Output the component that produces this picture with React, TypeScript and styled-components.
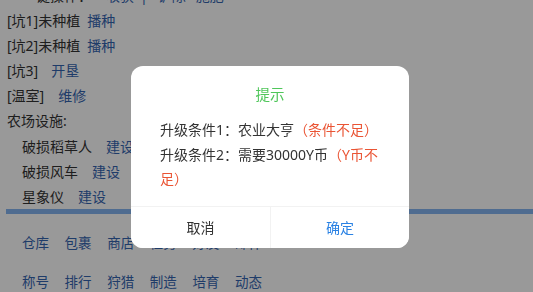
import styled, { createGlobalStyle } from "styled-components";

const GlobalStyle = createGlobalStyle`
  html, body {
    margin: 0;
    padding: 0;
    background: #ffffff;
    font-family: "Noto Sans", "Noto Sans CJK SC", sans-serif;
    overflow: hidden;
  }
`;

// page under the dialog
const Page = styled.div`
  margin-top: -17px;
  color: #333333;
  font-size: 14px;
`;

const Lines = styled.div`
  padding-left: 7px;
`;

const Line = styled.div<{ $indent?: boolean }>`
  height: 25.1px;
  line-height: 25.1px;
  white-space: nowrap;
  padding-left: ${(p) => (p.$indent ? "15px" : "0")};
`;

const Link = styled.a<{ $gap?: number }>`
  color: #3565b0;
  text-decoration: none;
  margin-left: ${(p) => p.$gap ?? 7}px;
`;

const Bar = styled.div`
  height: 5px;
  margin: 0 0 0 6px;
  background: #84b5f0;
`;

const Nav = styled.div`
  padding: 20px 0 0 22px;
  display: flex;
  flex-direction: column;
  gap: 20px;
`;

const NavRow = styled.div`
  display: flex;
  gap: 15.6px;
  line-height: 19px;
  font-size: 13.5px;
`;

const NavLink = styled.a`
  color: #3565b0;
  text-decoration: none;
  width: 27px;
  white-space: nowrap;
`;

// dialog
const Overlay = styled.div`
  position: fixed;
  inset: 0;
  background: rgba(0, 0, 0, 0.4);
  display: flex;
  align-items: center;
  justify-content: center;
  padding: 22px 0 0 7px;
`;

const Dialog = styled.div`
  width: 278px;
  background: #ffffff;
  border-radius: 12px;
  overflow: hidden;
  font-size: 14px;
`;

const Body = styled.div`
  padding: 18px 29px 14px;
`;

const Title = styled.div`
  text-align: center;
  color: #4fc65a;
  line-height: 20px;
  font-size: 14.5px;
  margin-bottom: 14px;
`;

const Content = styled.div`
  color: #333333;
  line-height: 24.5px;
`;

const Warn = styled.span`
  color: #ea5434;
`;

const Footer = styled.div`
  display: grid;
  grid-template-columns: 1fr 1fr;
  border-top: 1px solid #f2f2f2;
  height: 41px;
`;

const Button = styled.button<{ $primary?: boolean }>`
  border: none;
  background: #ffffff;
  font-family: inherit;
  font-size: 14px;
  color: ${(p) => (p.$primary ? "#2a82e4" : "#333333")};
  border-left: ${(p) => (p.$primary ? "1px solid #f2f2f2" : "none")};
  padding: 0;
`;

const navTop = ["仓库", "包裹", "商店", "任务", "好友", "邮件"];
const navBottom = ["称号", "排行", "狩猎", "制造", "培育", "动态"];

export default function App() {
  return (
    <>
      <GlobalStyle />
      <Page>
        <Lines>
          <Line $indent>
            一键操作：<Link $gap={14}>收获</Link>
            <Link $gap={6}>|</Link>
            <Link $gap={10}>铲除</Link>
            <Link $gap={10}>施肥</Link>
          </Line>
          <Line>
            [坑1]未种植<Link>播种</Link>
          </Line>
          <Line>
            [坑2]未种植<Link>播种</Link>
          </Line>
          <Line>
            [坑3]<Link $gap={13}>开垦</Link>
          </Line>
          <Line>
            [温室]<Link $gap={14}>维修</Link>
          </Line>
          <Line>农场设施:</Line>
          <Line $indent>
            破损稻草人<Link $gap={14}>建设</Link>
          </Line>
          <Line $indent>
            破损风车<Link $gap={14}>建设</Link>
          </Line>
          <Line $indent>
            星象仪<Link $gap={14}>建设</Link>
          </Line>
        </Lines>
        <Bar />
        <Nav>
          <NavRow>
            {navTop.map((n) => (
              <NavLink key={n}>{n}</NavLink>
            ))}
          </NavRow>
          <NavRow>
            {navBottom.map((n) => (
              <NavLink key={n}>{n}</NavLink>
            ))}
          </NavRow>
        </Nav>
      </Page>
      <Overlay>
        <Dialog>
          <Body>
            <Title>提示</Title>
            <Content>
              升级条件1：农业大亨<Warn>（条件不足）</Warn>
              <br />
              升级条件2：需要30000Y币<Warn>（Y币不足）</Warn>
            </Content>
          </Body>
          <Footer>
            <Button>取消</Button>
            <Button $primary>确定</Button>
          </Footer>
        </Dialog>
      </Overlay>
    </>
  );
}
